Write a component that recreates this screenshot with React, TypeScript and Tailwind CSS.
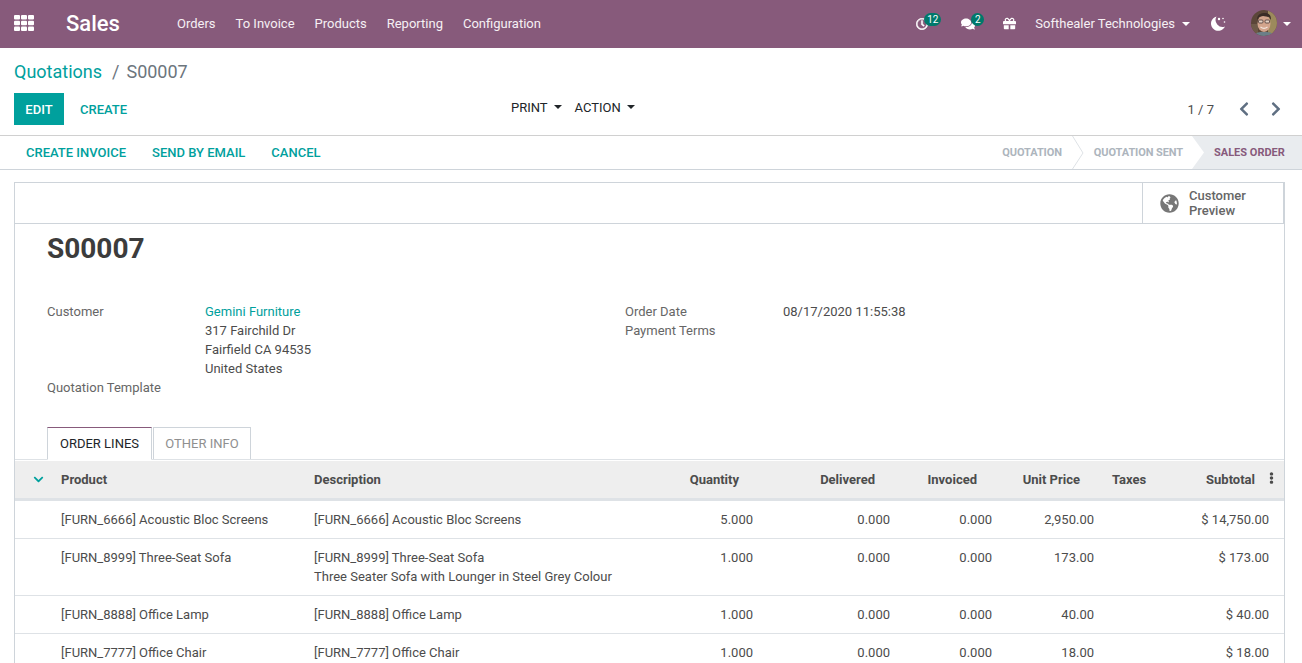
import { FaRegClock, FaComments, FaGift, FaChevronLeft, FaChevronRight, FaGlobeAmericas, FaChevronDown, FaEllipsisV } from "react-icons/fa";

const Caret = ({ className = "" }: { className?: string }) => (
  <span className={`inline-block w-0 h-0 border-x-[4px] border-x-transparent border-t-[4px] ${className}`} />
);

const cols = "grid grid-cols-[46px_253px_326px_99px_136px_102px_103px_32px_143px_15px]";

const rows = [
  { p: "[FURN_6666] Acoustic Bloc Screens", d: "[FURN_6666] Acoustic Bloc Screens", q: "5.000", u: "2,950.00", s: "$ 14,750.00", h: "h-[38px]" },
  { p: "[FURN_8999] Three-Seat Sofa", d: "[FURN_8999] Three-Seat Sofa", d2: "Three Seater Sofa with Lounger in Steel Grey Colour", q: "1.000", u: "173.00", s: "$ 173.00", h: "h-[57px]" },
  { p: "[FURN_8888] Office Lamp", d: "[FURN_8888] Office Lamp", q: "1.000", u: "40.00", s: "$ 40.00", h: "h-[38px]" },
  { p: "[FURN_7777] Office Chair", d: "[FURN_7777] Office Chair", q: "1.000", u: "18.00", s: "$ 18.00", h: "h-[38px]" },
];

export default function App() {
  return (
    <div className="h-[663px] w-[1302px] overflow-hidden bg-white text-[13px] leading-[19px] text-[#4c4c4c] font-['Roboto',sans-serif]">
      <nav className="h-12 bg-[#875a7b] flex items-center text-white pb-[2px]">
        <svg width="20" height="16" viewBox="0 0 20 16" fill="#fff" className="ml-[14px] mr-[32px]">
          <rect x="0" y="0" width="6" height="4.600" rx="1" />
          <rect x="7" y="0" width="6" height="4.600" rx="1" />
          <rect x="14" y="0" width="6" height="4.600" rx="1" />
          <rect x="0" y="5.700" width="6" height="4.600" rx="1" />
          <rect x="7" y="5.700" width="6" height="4.600" rx="1" />
          <rect x="14" y="5.700" width="6" height="4.600" rx="1" />
          <rect x="0" y="11.400" width="6" height="4.600" rx="1" />
          <rect x="7" y="11.400" width="6" height="4.600" rx="1" />
          <rect x="14" y="11.400" width="6" height="4.600" rx="1" />
        </svg>
        <span className="text-[22px] font-medium w-[111px]">Sales</span>
        <div className="flex gap-5 text-[13px] text-[#f6f0f4]">
          <span>Orders</span>
          <span>To Invoice</span>
          <span>Products</span>
          <span>Reporting</span>
          <span>Configuration</span>
        </div>
        <div className="ml-auto flex items-center">
          <div className="relative mr-[33px] mt-[1px]">
            <FaRegClock className="w-[12px] h-[12px] stroke-[20px]" />
            <span className="absolute left-[8px] -top-[5px] h-[13px] w-[17px] rounded-full bg-[#00796b] text-[10px] leading-[13px] text-center">12</span>
          </div>
          <div className="relative mr-[28px] mt-[1px]">
            <FaComments className="w-[14px] h-[14px]" />
            <span className="absolute left-[10px] -top-[4px] h-[13px] w-[13px] rounded-full bg-[#00796b] text-[10px] leading-[13px] text-center">2</span>
          </div>
          <FaGift className="w-[13px] h-[13px] mr-[19px] mt-[1px]" />
          <span className="text-[#f6f0f4] mr-[7px]">Softhealer Technologies</span>
          <Caret className="border-t-white mr-[20px] mt-[1px]" />
          <svg width="16" height="15" viewBox="0 0 16 15" fill="#fff" className="mr-[25px] mt-[1px]">
            <path d="M6.500 0.500A7.300 7.300 0 1 0 15 10.500A7 7 0 0 1 6.500 0.500z" />
            <circle cx="9" cy="3" r="1.200" />
            <circle cx="13" cy="2.500" r="0.800" />
            <circle cx="14.500" cy="6" r="0.800" />
          </svg>
          <svg width="26" height="26" viewBox="0 0 26 26" className="mr-[6px]">
            <defs><clipPath id="av"><circle cx="13" cy="13" r="13" /></clipPath></defs>
            <g clipPath="url(#av)">
              <rect width="26" height="26" fill="#5b4638" />
              <rect x="17" width="9" height="26" fill="#9c8a5c" />
              <rect y="14" width="7" height="12" fill="#6e5a48" />
              <ellipse cx="13" cy="13.500" rx="6.500" ry="8.500" fill="#d3a58d" />
              <path d="M6 10C6 4 10 3 14 3s6 2 6 7l-2-3-6-1-4 1z" fill="#3a2c26" />
              <rect x="7.500" y="10" width="4.500" height="3" rx="1" fill="#e7d2c4" stroke="#4a3a38" strokeWidth="0.800" />
              <rect x="14" y="10" width="4.500" height="3" rx="1" fill="#e7d2c4" stroke="#4a3a38" strokeWidth="0.800" />
              <path d="M9.500 17c2 1.500 5 1.500 7 0" fill="none" stroke="#f3e6df" strokeWidth="1.200" />
              <path d="M3 26c2-4 5-4 10-4s8 0 10 4z" fill="#6b7f88" />
            </g>
          </svg>
          <Caret className="border-t-white mr-[11px] mt-[1px]" />
        </div>
      </nav>

      <div className="h-[88px] border-b border-[#d0d0d0] pl-[14px] pr-[18px]">
        <div className="h-[45px] flex items-center pt-[1px] text-[18px] leading-[25px]">
          <span className="text-[#00a09d]">Quotations</span>
          <span className="text-[#6c757d] ml-[10px] mr-[7px]">/</span>
          <span className="text-[#6c757d]">S00007</span>
        </div>
        <div className="flex items-center h-[32px]">
          <div className="w-[50px] h-[32px] bg-[#00a09d] text-white font-medium flex items-center justify-center mr-[16px]">EDIT</div>
          <span className="text-[#00a09d] font-medium w-[431px]">CREATE</span>
          <div className="flex items-center text-[#212529] -mt-[4px]">
            <span className="mr-[6px]">PRINT</span>
            <Caret className="border-t-[#212529] mr-[12px]" />
            <span className="mr-[6px] ml-px">ACTION</span>
            <Caret className="border-t-[#212529]" />
          </div>
          <div className="ml-auto flex items-center">
            <span className="mr-[22px]">1 / 7</span>
            <FaChevronLeft className="w-[16px] h-[16px] text-[#5f6f82] mr-[16px] -mt-[1px]" />
            <FaChevronRight className="w-[16px] h-[16px] text-[#5f6f82] -mt-[1px]" />
          </div>
        </div>
      </div>

      <div className="h-[34px] border-b border-[#ced4da] flex items-center justify-between pl-[26px] font-medium">
        <div className="flex gap-[26px] text-[#00a09d] -mt-[1px]">
          <span>CREATE INVOICE</span>
          <span>SEND BY EMAIL</span>
          <span>CANCEL</span>
        </div>
        <div className="flex h-full items-center text-[11px] text-[#adb5bd] font-bold relative">
          <span className="mr-[10px] tracking-[-0.1px]">QUOTATION</span>
          <svg width="12" height="34" viewBox="0 0 12 34" className="mr-[10px]"><path d="M0.500 0L11 17 0.500 33" fill="none" stroke="#dee2e6" /></svg>
          <span className="mr-[9px] tracking-[-0.1px]">QUOTATION SENT</span>
          <div className="relative h-[33px] w-[110px] bg-[#e9ecef] flex items-center pl-[22px] text-[#875a7b]">
            <svg width="12" height="33" viewBox="0 0 12 33" className="absolute left-0 top-0"><path d="M0 0L12 16.500 0 33z" fill="#fff" /></svg>
            SALES ORDER
          </div>
        </div>
      </div>

      <div className="pl-[14px] pr-[17px] pt-3">
        <div className="border border-[#ced4da]">
          <div className="h-[41px] border-b border-[#ced4da] flex justify-end">
            <div className="w-[142px] border-l border-r border-[#ced4da] flex items-center">
              <FaGlobeAmericas className="ml-[17px] mr-[10px] w-[19px] h-[19px] text-[#777]" />
              <span className="font-medium text-[#666] leading-[15px]">Customer<br />Preview</span>
            </div>
          </div>

          <div className="pl-[32px] pt-[8px]">
            <h1 className="text-[28px] leading-[34px] font-bold text-[#3c3c3c]">S00007</h1>
            <div className="mt-[36px] h-[125px] grid grid-cols-[158px_420px_158px_1fr]">
              <div className="flex flex-col justify-between h-[95px] text-[#666]">
                <span>Customer</span>
                <span>Quotation Template</span>
              </div>
              <div>
                <div className="text-[#00a09d]">Gemini Furniture</div>
                <div>317 Fairchild Dr</div>
                <div>Fairfield CA 94535</div>
                <div>United States</div>
              </div>
              <div className="text-[#666]">
                <div>Order Date</div>
                <div>Payment Terms</div>
              </div>
              <div>08/17/2020 11:55:38</div>
            </div>
            <div className="flex gap-px h-[32px]">
              <div className="w-[105px] h-[33px] bg-white border border-[#ced4da] border-t-[#875a7b] border-b-white relative z-10 flex items-center justify-center text-[#212529]">ORDER LINES</div>
              <div className="w-[98px] h-[32px] border border-[#ced4da] border-b-0 flex items-center justify-center text-[#8f8f8f]">OTHER INFO</div>
            </div>
          </div>
          <div className="border-t border-[#dee2e6] pt-px">
            <div className={`${cols} h-[40px] bg-[#eeeeee] border-b-[3px] border-[#dee2e6] font-bold text-[#4c4c4c] items-center`}>
              <FaChevronDown className="ml-[18px] w-[11px] h-[11px] text-[#00a09d]" />
              <span>Product</span>
              <span>Description</span>
              <span className="text-right">Quantity</span>
              <span className="text-right">Delivered</span>
              <span className="text-right">Invoiced</span>
              <span className="text-right">Unit Price</span>
              <span />
              <span className="flex justify-between"><span>Taxes</span><span>Subtotal</span></span>
              <FaEllipsisV className="ml-[11px] w-[11px] h-[12px] -mt-[4px]" />
            </div>
            {rows.map((r) => (
              <div key={r.p} className={`${cols} ${r.h} border-b border-[#dee2e6] items-start pt-[9px]`}>
                <span />
                <span>{r.p}</span>
                <span>{r.d}{r.d2 && <><br />{r.d2}</>}</span>
                <span className="text-right translate-x-[14px]">{r.q}</span>
                <span className="text-right translate-x-[15px]">0.000</span>
                <span className="text-right translate-x-[15px]">0.000</span>
                <span className="text-right translate-x-[14px]">{r.u}</span>
                <span />
                <span className="text-right translate-x-[14px]">{r.s}</span>
                <span />
              </div>
            ))}
          </div>
        </div>
      </div>
    </div>
  );
}
